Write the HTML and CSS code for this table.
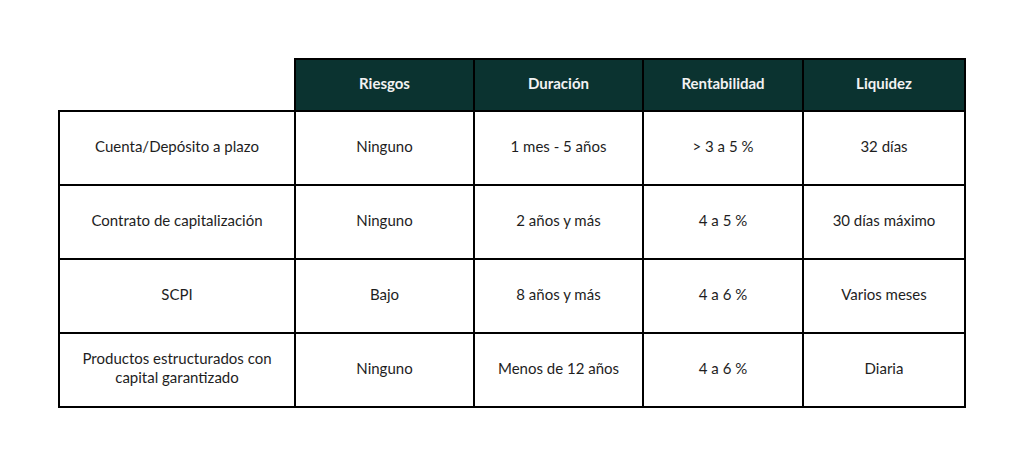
FILE: index.html
```html
<!DOCTYPE html>
<html lang="es">
<head>
<meta charset="utf-8">
<link rel="stylesheet" href="styles.css">
</head>
<body>
<table class="cmp">
  <colgroup>
    <col class="c1"><col class="c2"><col class="c3"><col class="c4"><col class="c5">
  </colgroup>
  <thead>
    <tr class="head">
      <th class="blank"></th>
      <th>Riesgos</th>
      <th>Duración</th>
      <th>Rentabilidad</th>
      <th>Liquidez</th>
    </tr>
  </thead>
  <tbody>
    <tr>
      <td>Cuenta/Depósito a plazo</td>
      <td>Ninguno</td>
      <td>1 mes - 5 años</td>
      <td>&gt; 3 a 5 %</td>
      <td>32 días</td>
    </tr>
    <tr>
      <td>Contrato de capitalización</td>
      <td>Ninguno</td>
      <td>2 años y más</td>
      <td>4 a 5 %</td>
      <td>30 días máximo</td>
    </tr>
    <tr>
      <td>SCPI</td>
      <td>Bajo</td>
      <td>8 años y más</td>
      <td>4 a 6 %</td>
      <td>Varios meses</td>
    </tr>
    <tr>
      <td>Productos estructurados con<br>capital garantizado</td>
      <td>Ninguno</td>
      <td>Menos de 12 años</td>
      <td>4 a 6 %</td>
      <td>Diaria</td>
    </tr>
  </tbody>
</table>
</body>
</html>
```

FILE: styles.css
```css
html, body {
  margin: 0;
  padding: 0;
  background: #ffffff;
}

body {
  font-family: Lato, "Liberation Sans", sans-serif;
  color: #1e1e1e;
  font-size: 15px;
}

.cmp {
  margin: 58px 0 0 58px;
  width: 906px;
  table-layout: fixed;
  border-collapse: collapse;
}

.c1 { width: 236px; }
.c2 { width: 179px; }
.c3 { width: 169px; }
.c4 { width: 160px; }
.c5 { width: 162px; }

.cmp th,
.cmp td {
  border: 2px solid #000000;
  text-align: center;
  vertical-align: middle;
  padding: 0 6px 4px;
  line-height: 19px;
}

.cmp th {
  background: #0b3330;
  color: #f2f2f2;
  font-weight: 700;
  height: 46px;
}

.cmp th.blank {
  background: transparent;
  border-top: none;
  border-left: none;
}

.cmp td {
  height: 68px;
}
```
